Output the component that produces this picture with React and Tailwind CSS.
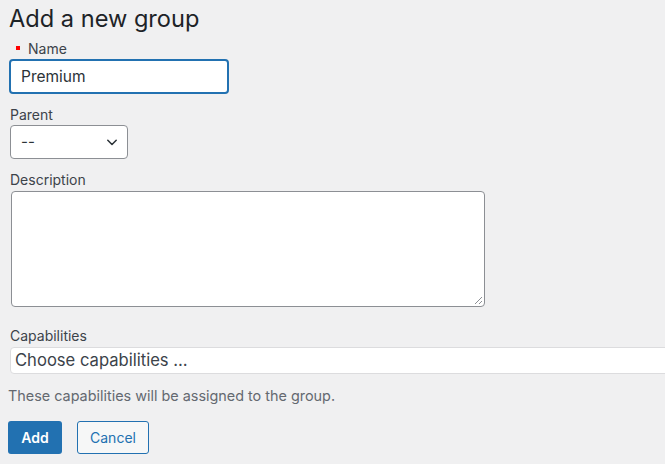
import React from 'react'

export default function App() {
  return (
    <div
      className="w-[665px] h-[464px] overflow-hidden bg-[#f0f0f1] text-[#1d2327]"
      style={{ fontFamily: 'Inter, "Liberation Sans", sans-serif' }}
    >
      <div className="pl-[9px] pt-[4px]">
        <h2 className="text-[23.6px] leading-[30px] font-normal text-[#1d2327]">Add a new group</h2>

        {/* Name */}
        <div className="mt-[5px] flex items-center h-[18px] text-[14px] text-[#3c434a]">
          <span className="ml-[7px] w-[4px] h-[4px] bg-[#ff0000]" />
          <span className="ml-[8px]">Name</span>
        </div>
        <div className="mt-[2px] w-[220px] h-[35px] rounded-[4px] border-2 border-[#2271b1] bg-white flex items-center pl-[10px] text-[15.5px] text-[#2c3338]">
          Premium
        </div>

        {/* Parent */}
        <div className="mt-[11px] ml-[1px] h-[18px] text-[14px] text-[#3c434a] flex items-center">Parent</div>
        <div className="mt-[2px] ml-[1px] w-[118px] h-[34px] rounded-[4px] border border-[#8c8f94] bg-white flex items-center justify-between pl-[10px] pr-[8px] text-[15px] text-[#2c3338]">
          <span>--</span>
          <svg width="14" height="14" viewBox="0 0 20 20" fill="none" stroke="#2c3338" strokeWidth="2.2" strokeLinecap="round" strokeLinejoin="round">
            <path d="M4 7.5l6 6 6-6" />
          </svg>
        </div>

        {/* Description */}
        <div className="mt-[11px] ml-[1px] h-[18px] text-[14px] text-[#3c434a] flex items-center">Description</div>
        <div className="relative mt-[3px] ml-[2px] w-[474px] h-[116px] rounded-[4px] border border-[#8c8f94] bg-white">
          <svg className="absolute right-[1px] bottom-[1px]" width="9" height="9" viewBox="0 0 9 9" stroke="#8c8f94" strokeWidth="1">
            <path d="M8 1L1 8M8 5L5 8" />
          </svg>
        </div>

        {/* Capabilities */}
        <div className="mt-[19px] ml-[1px] h-[18px] text-[14px] text-[#3c434a] flex items-center">Capabilities</div>
        <div className="mt-[3px] ml-[1px] w-[680px] h-[27px] rounded-[4px] border border-[#dcdcde] bg-white flex items-center pl-[4px] text-[16.6px] text-[#3c434a]">
          Choose capabilities …
        </div>
        <p className="mt-[13px] -ml-[1px] text-[14.4px] leading-[18px] text-[#646970]">
          These capabilities will be assigned to the group.
        </p>

        {/* Buttons */}
        <div className="mt-[16px] -ml-[1px] flex items-center gap-[15px]">
          <button className="h-[33px] w-[54px] rounded-[3px] bg-[#2271b1] text-white text-[14px] font-semibold">Add</button>
          <button className="h-[33px] w-[72px] rounded-[3px] border border-[#2271b1] bg-[#f6f7f7] text-[#2271b1] text-[14px]">Cancel</button>
        </div>
      </div>
    </div>
  )
}
